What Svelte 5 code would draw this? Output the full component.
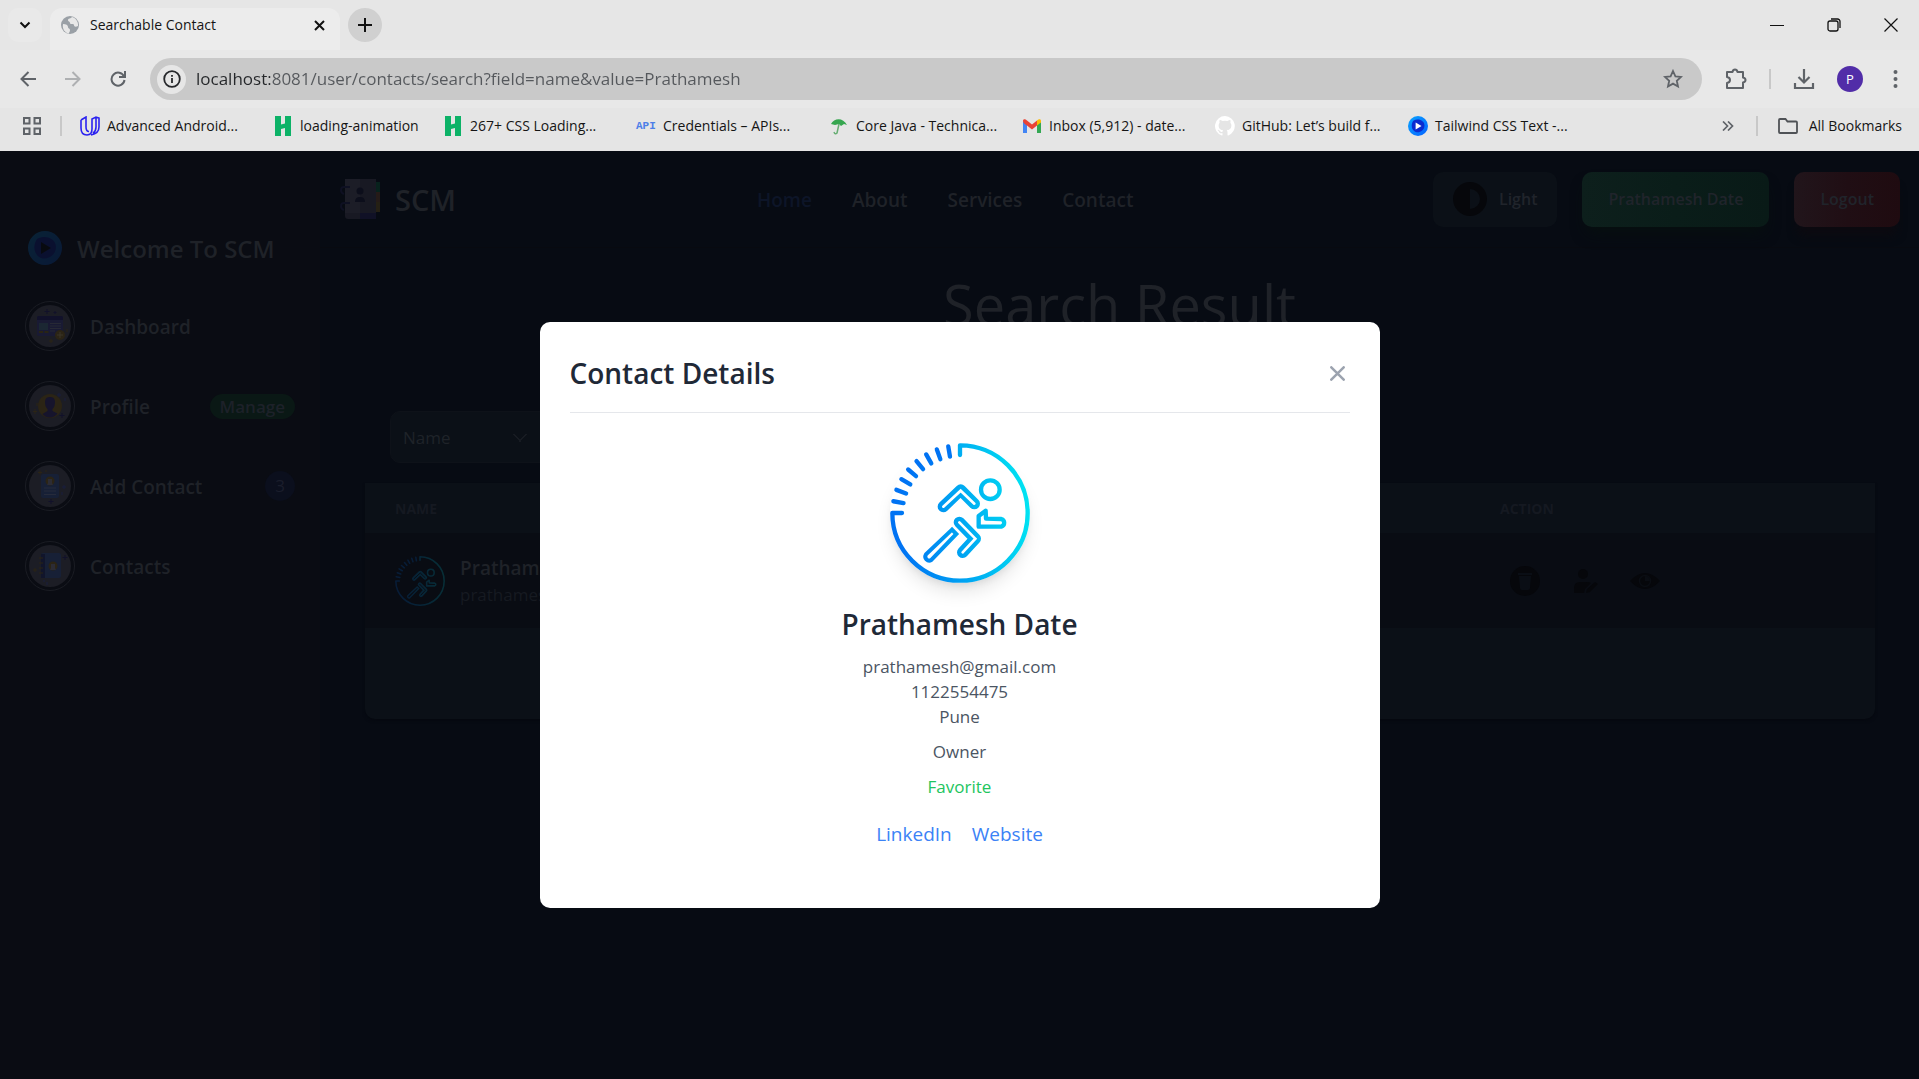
<script>
  const bookmarks = [
    { label: 'Advanced Android...', icon: 'udacity' },
    { label: 'loading-animation', icon: 'h', short: true },
    { label: '267+ CSS Loading...', icon: 'h' },
    { label: 'Credentials – APIs...', icon: 'api' },
    { label: 'Core Java - Technica...', icon: 'umbrella' },
    { label: 'Inbox (5,912) - date...', icon: 'gmail' },
    { label: 'GitHub: Let’s build f...', icon: 'github' },
    { label: 'Tailwind CSS Text -...', icon: 'play' },
  ];
  const menu = [
    { label: 'Dashboard', icon: 'dashboard' },
    { label: 'Profile', icon: 'profile', badge: 'Manage' },
    { label: 'Add Contact', icon: 'add', count: '3' },
    { label: 'Contacts', icon: 'contacts' },
  ];
  const nav = ['Home', 'About', 'Services', 'Contact'];
  const ticks = [10, 20, 30, 40, 50, 60, 70, 80];
  let url = $state('localhost:8081/user/contacts/search?field=name&value=Prathamesh');
  let field = $state('Name');
  let open = $state(true);
</script>

{#snippet runner(id, inner)}
  <svg class="runner" viewBox="90 69 420 420" fill="none" aria-hidden="true">
    <defs>
      <linearGradient id={id} gradientUnits="userSpaceOnUse" x1="110" y1="300" x2="505" y2="250">
        <stop offset="0" stop-color="#0072f3" />
        <stop offset="0.5" stop-color="#00a9f2" />
        <stop offset="1" stop-color="#00e3f2" />
      </linearGradient>
    </defs>
    <g stroke="url(#{id})" stroke-width="13" stroke-linecap="round" stroke-linejoin="round">
      <path d="M300 105V76A203 203 0 1 1 97 279H126" />
      {#each ticks as t}
        <path d="M97 279L128 279.2" transform="rotate({t} 300 279)" />
      {/each}
      <circle cx="391" cy="209" r="28" />
      <path d="M250 260L302 210L343 251" stroke-width="34" />
      <path d="M298 307L346 356L308 397" stroke-width="34" />
      <path d="M276 329L198 403A12 12 0 0 0 214 420L289 342Z" stroke-width="12" stroke-linejoin="miter" />
      <path d="M377 272L356 288V320H424A12 12 0 0 0 424 297L378 296Z" stroke-width="13" />
    </g>
    <g stroke={inner} stroke-width="8" stroke-linecap="round" stroke-linejoin="miter">
      <path d="M250 260L302 212L343 251" />
      <path d="M298 307L346 356L308 397" />
    </g>
  </svg>
{/snippet}

{#snippet swirl(id)}
  <svg viewBox="0 0 34 34" aria-hidden="true">
    <defs>
      <linearGradient {id} x1="0" y1="0" x2="1" y2="1">
        <stop offset="0" stop-color="#0aa4ff" />
        <stop offset="1" stop-color="#0562ff" />
      </linearGradient>
    </defs>
    <circle cx="17" cy="17" r="17" fill="url(#{id})" />
    <path d="M9 8c9-5 19 0 19 8 0 9-9 13-15 11-8-3-8-14-4-19z" fill="#0b2bd0" />
    <path d="M13 11l10 6-10 6z" class="play-mark" />
  </svg>
{/snippet}

<div class="window">
  <header class="browser">
    <div class="tabs">
      <button class="drop" aria-label="Search tabs">
        <svg width="12" height="8" viewBox="0 0 12 8" fill="none" stroke="#111" stroke-width="2"><path d="M1.500 1.500L6 6l4.500-4.500" /></svg>
      </button>
      <div class="tab">
        <svg width="20" height="20" viewBox="0 0 20 20"><circle cx="10" cy="10" r="9" fill="#9aa0a6" /><path d="M3 9c3 0 5 1 5 3s2 1 2 3-1 2-1 3.500C5 18 2 14 3 9zM12 2c-1 2-4 1-4 3s2 1 2 3 4 0 4 2 2 2 4 1c.6-4-2-8-6-9z" fill="#e8e8e8" /></svg>
        <span>Searchable Contact</span>
        <button aria-label="Close tab">
          <svg width="11" height="11" viewBox="0 0 11 11" stroke="#111" stroke-width="2"><path d="M1 1l9 9M10 1l-9 9" /></svg>
        </button>
      </div>
      <button class="new" aria-label="New tab">
        <svg width="14" height="14" viewBox="0 0 14 14" stroke="#111" stroke-width="2"><path d="M7 0v14M0 7h14" /></svg>
      </button>
      <div class="controls">
        <button aria-label="Minimize"><svg width="14" height="14" viewBox="0 0 14 14" stroke="#111"><path d="M0 7.500h14" /></svg></button>
        <button aria-label="Restore"><svg width="14" height="14" viewBox="0 0 14 14" fill="none" stroke="#111" stroke-width="1.300"><rect x="1" y="3" width="10" height="10" rx="2" /><path d="M4 1h6.500A2.500 2.500 0 0 1 13 3.500V10" /></svg></button>
        <button aria-label="Close"><svg width="14" height="14" viewBox="0 0 14 14" stroke="#111" stroke-width="1.200"><path d="M.5.5l13 13M13.500.5l-13 13" /></svg></button>
      </div>
    </div>

    <div class="toolbar">
      <button class="tool" aria-label="Back"><svg width="16" height="16" viewBox="0 0 16 16" fill="none" stroke="#5f6368" stroke-width="2"><path d="M16 8H2M8.500 1L1.500 8l7 7" /></svg></button>
      <button class="tool" aria-label="Forward"><svg width="16" height="16" viewBox="0 0 16 16" fill="none" stroke="#aeb0b2" stroke-width="2"><path d="M0 8h14M7.500 1l7 7-7 7" /></svg></button>
      <button class="tool" aria-label="Reload"><svg width="16" height="16" viewBox="0 0 16 16" fill="none" stroke="#5f6368" stroke-width="2"><path d="M14 5.500A6.500 6.500 0 1 0 14.500 9M15 0v6H9" /></svg></button>
      <div class="address">
        <button class="info" aria-label="Site information">
          <svg width="18" height="18" viewBox="0 0 18 18" fill="none" stroke="#26282b" stroke-width="1.800"><circle cx="9" cy="9" r="7.800" /><path d="M9 8v5M9 5v1.700" /></svg>
        </button>
        <input type="text" aria-label="Address" bind:value={url} />
        <button class="star" aria-label="Bookmark this tab">
          <svg width="20" height="20" viewBox="0 0 20 20" fill="none" stroke="#5f6368" stroke-width="1.800"><path d="M10 2l2.400 5.300 5.600.6-4.200 3.900 1.200 5.700-5-2.900-5 2.900 1.200-5.700L2 7.900l5.600-.6z" /></svg>
        </button>
      </div>
      <div class="extras">
        <button aria-label="Extensions"><svg width="22" height="22" viewBox="0 0 22 22" fill="none" stroke="#5f6368" stroke-width="2"><path d="M2 4h5.500q.5-2.500 2.500-2.500T12.500 4H18v5.500q2.500.5 2.500 2.500T18 14.500V20H2v-5q3-.5 3-3T2 9z" stroke-linejoin="round" /></svg></button>
        <i class="rule"></i>
        <button aria-label="Downloads"><svg width="22" height="22" viewBox="0 0 22 22" fill="none" stroke="#5f6368" stroke-width="2.200"><path d="M11 1v13M5.500 9l5.500 5.500L16.500 9M2 15v5h18v-5" /></svg></button>
        <button class="avatar" aria-label="Profile P">P</button>
        <button aria-label="Menu"><svg width="5" height="18" viewBox="0 0 5 18" fill="#5f6368"><circle cx="2.500" cy="2" r="2" /><circle cx="2.500" cy="9" r="2" /><circle cx="2.500" cy="16" r="2" /></svg></button>
      </div>
    </div>

    <nav class="bookmarks" aria-label="Bookmarks">
      <button class="apps" aria-label="Apps"><svg width="18" height="18" viewBox="0 0 18 18" fill="none" stroke="#5f6368" stroke-width="2"><path d="M1 1h5.500v5.500H1zM11.500 1H17v5.500h-5.500zM1 11.500h5.500V17H1zM11.500 11.500H17V17h-5.500z" /></svg></button>
      <i class="rule"></i>
      <div class="list">
        {#each bookmarks as b}
          <a href="#top" class:short={b.short}>
            {#if b.icon === 'udacity'}
              <svg width="20" height="20" viewBox="0 0 20 20" fill="none" stroke="#2b22f0" stroke-width="1.600"><path d="M1 4l5-3v10c0 3 1 4.500 3 4.500M1 4v8c0 4 2 7 6 7 3 0 5-2 5-6V3l4-2 3 1v9c0 4-3 7-8 8M16 1v10c0 3-1 5-3 6.500" /></svg>
            {:else if b.icon === 'h'}
              <svg width="20" height="20" viewBox="0 0 20 20" fill="#0cb267"><path d="M2 0h6v8.500l4-1V0h6v20h-6v-8l-4 1v7H2z" /></svg>
            {:else if b.icon === 'api'}
              <span class="api">API</span>
            {:else if b.icon === 'umbrella'}
              <svg width="20" height="20" viewBox="0 0 20 20"><path d="M2 8C5 2 14 1 18 9l-3-1-3 2-2-2-4 1z" fill="#36a64f" /><path d="M10 8L8 17q-2 2-3-1" fill="none" stroke="#66ad72" stroke-width="1.500" /></svg>
            {:else if b.icon === 'gmail'}
              <svg width="20" height="20" viewBox="0 0 20 20"><path d="M1 5v12h4V8z" fill="#4285f4" /><path d="M19 5v12h-4V8z" fill="#34a853" /><path d="M15 4.500V9.500l4-3V5c0-2-2-2.500-4-.5z" fill="#fbbc04" /><path d="M5 4.500l5 4 5-4v5l-5 4-5-4C3 8 1 7 1 5c0-2 2-2.500 4-.5z" fill="#ea4335" /></svg>
            {:else if b.icon === 'github'}
              <svg width="20" height="20" viewBox="0 0 16 16" fill="#fff"><path d="M8 0a8 8 0 0 0-2.500 15.600c.4.1.5-.2.500-.4v-1.500c-2.200.5-2.700-1-2.700-1-.4-.9-.9-1.200-.9-1.200-.7-.5.1-.5.1-.5.8.1 1.200.8 1.200.8.7 1.300 1.900.9 2.300.7.1-.5.3-.9.500-1.100-1.800-.2-3.600-.9-3.600-4 0-.9.3-1.600.8-2.100-.1-.2-.4-1 .1-2.100 0 0 .7-.2 2.200.8a7.500 7.500 0 0 1 4 0c1.500-1 2.200-.8 2.200-.8.4 1.100.1 1.900.1 2.100.5.6.8 1.300.8 2.100 0 3.100-1.900 3.800-3.700 4 .3.200.6.7.6 1.500v2.200c0 .2.100.5.6.4A8 8 0 0 0 8 0z" /></svg>
            {:else}
              <span class="mini">{@render swirl('swirlSmall')}</span>
            {/if}
            <span>{b.label}</span>
          </a>
        {/each}
      </div>
      <button class="more" aria-label="More bookmarks"><svg width="12" height="10" viewBox="0 0 12 10" fill="none" stroke="#5f6368" stroke-width="1.700"><path d="M1 .5L5.500 5 1 9.500M6 .5L10.500 5 6 9.500" /></svg></button>
      <i class="rule"></i>
      <button class="all">
        <svg width="20" height="16" viewBox="0 0 20 16" fill="none" stroke="#4f5256" stroke-width="1.800"><path d="M1 2q0-1 1-1h5.500l2 2.500H18q1 0 1 1V14q0 1-1 1H2q-1 0-1-1z" /></svg>
        <span>All Bookmarks</span>
      </button>
    </nav>
  </header>

  <div class="page">
    <aside>
      <div class="welcome">
        <span class="brand-mark">{@render swirl('swirlLarge')}</span>
        <h2>Welcome To SCM</h2>
      </div>
      <ul>
        {#each menu as m}
          <li>
            <a href="#top">
              <span class="ring">
                <svg viewBox="0 0 42 42" aria-hidden="true">
                  <circle cx="21" cy="21" r="21" fill="#1c1d25" />
                  {#if m.icon === 'dashboard'}
                    <rect x="8" y="11" width="26" height="20" rx="1.500" fill="#191a33" />
                    <path d="M8 15v-2.500Q8 11 9.500 11h23q1.500 0 1.500 1.500V15z" fill="#11112a" />
                    <path d="M10 18h9v7h-9z" fill="#1b2733" /><path d="M21 18.500h11M21 21h11M21 23.500h11M21 26h5" stroke="#272935" /><path d="M10 26h4v2h-4zM15.500 26h4v2h-4z" fill="#292414" />
                    <circle cx="31" cy="30" r="5" fill="#2b2415" /><path d="M31 27v6M28 30h6" stroke="#3a3428" />
                    <path d="M18 4v5M15.500 6.500h5M26 6v3M24.500 7.500h3" stroke="#11112a" /><path d="M22 34v4M20 36h4M38 24v3" stroke="#2b2415" />
                  {:else if m.icon === 'profile'}
                    <circle cx="21" cy="21" r="12" fill="#2b2415" />
                    <path d="M16 17q0-5 5-5t5 5q0 5-2.500 7v2l5 2.500q-3 4-7.500 4T13.500 29l5-3v-2Q16 22 16 17z" fill="#16142c" />
                    <path d="M30 8v4M28 10h4M36 13v3" stroke="#191f3f" /><path d="M33 28v5M30.500 30.500h5" stroke="#11112a" /><path d="M6 24v5M4 26.500h4M8 18v3" stroke="#2b2415" />
                  {:else if m.icon === 'add'}
                    <rect x="12" y="9" width="18" height="24" rx="2" fill="#172036" />
                    <circle cx="21" cy="16" r="4.500" fill="#2b2415" /><path d="M19 14h4v4l1 2h-6l1-2z" fill="#2c2c35" />
                    <path d="M15 23h12M15 26h12M15 29.500h12" stroke="#262b3b" />
                    <path d="M11 5.500v4M9 7.500h4M17 5v2" stroke="#2b2415" /><path d="M22 34v5M19.500 36.500h5" stroke="#11112a" /><path d="M35 20v4M33 22h4M33 27v3" stroke="#191f3f" />
                  {:else}
                    <rect x="12" y="8" width="20" height="25" rx="2" fill="#172036" /><path d="M12 9h4v24h-4z" fill="#11152b" />
                    <circle cx="24" cy="21" r="4.500" fill="#2b2415" /><path d="M22 19h4v4l1 2h-6l1-2z" fill="#2c2c35" />
                    <path d="M10 13h4M10 18h4M10 23h4M10 28h4" stroke="#2b2415" /><path d="M36 10v5M33.500 12.500h5" stroke="#11112a" /><path d="M6 23v4M4 25h4" stroke="#2b2415" /><path d="M14 36h2M18 37v3" stroke="#191f3f" />
                  {/if}
                </svg>
              </span>
              <span class="label">{m.label}</span>
              {#if m.badge}<span class="badge">{m.badge}</span>{/if}
              {#if m.count}<span class="count">{m.count}</span>{/if}
            </a>
          </li>
        {/each}
      </ul>
    </aside>

    <main>
      <div class="top">
        <a class="brand" href="#top">
          <svg width="40" height="42" viewBox="0 0 40 42" aria-hidden="true">
            <path d="M35 4h5v10h-5z" fill="#08221d" /><path d="M35 14h5v10h-5z" fill="#251b18" /><path d="M35 24h5v10h-5z" fill="#252014" />
            <path d="M5 1h31v40H8q-3 0-3-3z" fill="#181923" /><path d="M5 1h15v34H5z" fill="#1c1d27" /><path d="M20 35h16v6H20z" fill="#101126" />
            <circle cx="20" cy="13" r="3.500" fill="#0c0e1b" /><path d="M15 24q0-5 5-5t5 5z" fill="#0c0e1b" />
            <path d="M10 9H4q-3 0-3 3t3 4M10 25H4q-3 0-3 3t3 4" fill="none" stroke="#0e1022" stroke-width="2" />
          </svg>
          <span>SCM</span>
        </a>
        <nav aria-label="Main">
          {#each nav as n}<a href="#top" class:current={n === 'Home'}>{n}</a>{/each}
        </nav>
        <div class="actions">
          <button class="light">
            <svg width="34" height="34" viewBox="0 0 34 34" aria-hidden="true"><circle cx="17" cy="17" r="17" fill="#06070b" /><path d="M17 7a10 10 0 0 1 0 20z" fill="#0b1017" /></svg>
            <span>Light</span>
          </button>
          <button class="user">Prathamesh Date</button>
          <button class="logout">Logout</button>
        </div>
      </div>

      <h1>Search Result</h1>

      <div class="filter">
        <select aria-label="Search field" bind:value={field}>
          <option>Name</option>
        </select>
      </div>

      <div class="sheet">
        <table>
          <thead><tr><th>NAME</th><th class="act">ACTION</th></tr></thead>
          <tbody>
            <tr>
              <td>
                <div class="person">
                  <span class="face">{@render runner('ringSmall', '#0a0d14')}</span>
                  <div><strong>Prathamesh Date</strong><small>prathamesh@gmail.com</small></div>
                </div>
              </td>
              <td>
                <div class="icons">
                  <button aria-label="Delete"><svg width="30" height="30" viewBox="0 0 30 30"><circle cx="15" cy="15" r="15" fill="#06070b" /><path d="M8 7h14v2H8zM9 10h12l-1 12q0 2-2 2h-6q-2 0-2-2z" fill="#0a0e15" /></svg></button>
                  <button aria-label="Edit"><svg width="30" height="30" viewBox="0 0 30 30" fill="#06070b"><circle cx="13" cy="8" r="5" /><path d="M4 27v-5q0-6 6-6h6q4 0 5 1l-6 6-1 4zM16 27l1-4 8-7 3 2-8 8z" /></svg></button>
                  <button aria-label="View"><svg width="30" height="30" viewBox="0 0 30 30"><path d="M0 15q15-16 30 0-15 16-30 0z" fill="#06070b" /><circle cx="15" cy="15" r="5.500" fill="none" stroke="#0a0d13" stroke-width="1.500" /><path d="M15 15v-5a5 5 0 0 1 5 5z" fill="#0a0d13" /></svg></button>
                </div>
              </td>
            </tr>
          </tbody>
        </table>
      </div>
    </main>

    {#if open}
      <div class="overlay">
        <div class="modal" role="dialog" aria-modal="true" aria-labelledby="modal-title">
          <div class="modal-head">
            <h3 id="modal-title">Contact Details</h3>
            <button aria-label="Close modal" onclick={() => (open = false)}>
              <svg width="15" height="15" viewBox="0 0 15 15" fill="none" stroke="#9ca3af" stroke-width="2.500" stroke-linecap="round"><path d="M1.300 1.300l12.400 12.400M13.700 1.300L1.300 13.700" /></svg>
            </button>
          </div>
          <div class="modal-body">
            <span class="photo">{@render runner('ringLarge', '#fff')}</span>
            <h4>Prathamesh Date</h4>
            <p class="tight">prathamesh@gmail.com</p>
            <p class="tight">1122554475</p>
            <p>Pune</p>
            <p>Owner</p>
            <p class="fav">Favorite</p>
            <div class="links"><a href="#linkedin">LinkedIn</a><a href="#website">Website</a></div>
          </div>
        </div>
      </div>
    {/if}
  </div>
</div>

<style>
  :global(body) { margin: 0; }
  * { box-sizing: border-box; }
  .window { min-height: 100vh; display: flex; flex-direction: column; font-family: "Segoe UI", "Open Sans", sans-serif; }
  button { border: 0; padding: 0; background: none; font: inherit; color: inherit; display: flex; align-items: center; justify-content: center; cursor: pointer; }
  a { color: inherit; text-decoration: none; }
  svg { display: block; flex: none; }
  h1, h2, h3, h4, p, ul { margin: 0; padding: 0; list-style: none; }

  .browser { background: #e5e5e5; color: #151515; font-size: 14px; line-height: 20px; }
  .tabs { height: 50px; display: flex; align-items: center; padding-left: 8px; background: #e6e6e6; }
  .drop { width: 34px; height: 34px; border-radius: 10px; background: #e9e9e9; }
  .tab { width: 290px; height: 42px; margin: 8px 8px 0; padding: 0 15px 8px 10px; display: flex; align-items: center; gap: 10px; background: #ececec; border-radius: 12px 12px 0 0; }
  .tab span { flex: 1; }
  .new { width: 34px; height: 34px; border-radius: 50%; background: #d0d0d0; }
  .controls { margin-left: auto; display: flex; }
  .controls button { width: 57px; height: 50px; }
  .toolbar { height: 58px; display: flex; align-items: center; padding-left: 5px; background: #e8e8e8; }
  .tool { width: 45px; height: 42px; }
  .address { flex: 1; height: 42px; margin-left: 10px; padding: 0 19px 0 7px; display: flex; align-items: center; background: #c9c9c9; border-radius: 21px; }
  .info { width: 29px; height: 29px; border-radius: 50%; background: #e6e6e6; }
  .address input { flex: 1; min-width: 0; height: 30px; border: 0; outline: 0; padding: 0; margin-left: 10px; font: 17px/30px "Segoe UI", "Open Sans", sans-serif; color: #505357; -webkit-text-fill-color: transparent; background: linear-gradient(90deg, #25272a 74px, #55585c 74px); background-clip: text; -webkit-background-clip: text; }
  .extras { display: flex; align-items: center; gap: 22px; width: 217px; padding-left: 23px; }
  .rule { width: 2px; height: 20px; background: #c8c8c8; }
  .avatar { width: 26px; height: 26px; border-radius: 50%; background: #512da8; color: #fff; font-size: 13px; }
  .extras .avatar { margin-right: 8px; }
  .bookmarks { height: 43px; display: flex; align-items: center; padding: 0 17px 8px 23px; }
  .apps { margin-right: 19px; }
  .list { flex: 1; min-width: 0; display: flex; overflow: hidden; padding-left: 18px; }
  .list a { width: 193px; flex: none; display: flex; align-items: center; gap: 7px; white-space: nowrap; }
  .list a.short { width: 170px; }
  .api { width: 20px; font: bold 11px/20px "Liberation Mono", monospace; color: #4d7fe8; }
  .mini { width: 20px; height: 20px; --mark: #fff; }
  .play-mark { fill: var(--mark); }
  .more { margin-right: 22px; }
  .all { gap: 11px; margin-left: 20px; }

  .page { flex: 1; position: relative; display: grid; grid-template-columns: 320px 1fr; background: #070b13; color: #1f2228; }
  aside { background: #0a0c13; padding: 77px 25px 0; }
  .welcome { display: flex; align-items: center; gap: 15px; padding-left: 3px; height: 40px; }
  .brand-mark { width: 34px; height: 34px; opacity: .15; --mark: #000; }
  .welcome h2 { padding-top: 2px; font-size: 24px; line-height: 40px; font-weight: 600; white-space: nowrap; }
  aside ul { padding-top: 18px; }
  li a { height: 80px; display: flex; align-items: center; font-size: 19px; font-weight: 600; }
  .ring { width: 50px; height: 50px; padding: 3px; border: 1px solid #1a1c23; border-radius: 50%; }
  .label { margin-left: 15px; padding-top: 2px; }
  .badge { margin-left: auto; height: 25px; padding: 0 10px; border-radius: 13px; background: #0a1815; color: #1d2129; font-size: 17px; line-height: 26px; }
  .count { margin-left: auto; width: 30px; height: 30px; border-radius: 50%; background: #0b0f1d; color: #1b1e2c; font-size: 17px; line-height: 30px; text-align: center; font-weight: 500; }

  .top { height: 97px; padding: 0 19px 0 20px; display: grid; grid-template-columns: 417px 1fr auto; align-items: center; border-bottom: 1px solid #080a10; }
  .brand { display: flex; align-items: center; gap: 15px; font-size: 29px; font-weight: 600; }
  .top nav { display: flex; gap: 40px; padding-top: 2px; font-size: 19px; font-weight: 600; }
  .current { color: #0d1528; }
  .actions { display: flex; gap: 25px; }
  .actions button { height: 55px; padding: 0 26px; border-radius: 10px; font-size: 16px; font-weight: 600; color: #20242b; white-space: nowrap; }
  .actions .light { padding: 0 20px; gap: 12px; background: #0b1017; }
  .actions .user { background: linear-gradient(90deg, #0d1f1c, #0a1d19 50%, #091a17); box-shadow: 0 10px 15px -5px #07100f; }
  .actions .logout { background: linear-gradient(90deg, #21151b, #200e14 50%, #1f0b10); box-shadow: 0 12px 10px -3px #0c0a10; }
  h1 { margin-top: 26px; text-align: center; font-size: 56px; line-height: 60px; font-weight: 400; }
  .filter { padding: 77px 70px 0; }
  select { appearance: none; width: 184px; height: 52px; padding: 0 12px; border: 1px solid #0e1219; border-radius: 10px; color: #1f2329; font: 17px "Segoe UI", "Open Sans", sans-serif; background: linear-gradient(45deg, transparent 46%, #171b22 46% 58%, transparent 58%) 122px 22px / 8px 8px no-repeat, linear-gradient(-45deg, transparent 46%, #171b22 46% 58%, transparent 58%) 128px 22px / 8px 8px no-repeat, #0b1017; }
  .sheet { margin: 20px 44px 0 45px; padding-bottom: 91px; background: #0b1017; border-radius: 0 0 10px 10px; box-shadow: 0 2px 3px #060910; }
  table { width: 100%; border-collapse: collapse; text-align: left; }
  th { height: 50px; padding: 0 30px; font-size: 14px; font-weight: 700; color: #151921; }
  .act { width: 405px; }
  tbody { background: #090c13; }
  td { height: 95px; padding: 0 30px; }
  .person { display: flex; align-items: center; gap: 15px; }
  .face { width: 50px; height: 50px; opacity: .16; }
  .face :global(svg), .photo :global(svg), .brand-mark :global(svg), .mini :global(svg), .ring svg { width: 100%; height: 100%; }
  strong, small { display: block; }
  strong { font-size: 19px; line-height: 28px; font-weight: 600; }
  small { font-size: 17px; line-height: 25px; color: #161a21; }
  .icons { display: flex; gap: 30px; padding-left: 10px; }

  .overlay { position: absolute; inset: 0; display: flex; align-items: center; justify-content: center; }
  .modal { width: 100%; max-width: 840px; padding: 30px; background: #fff; border-radius: 10px; }
  .modal-head { height: 61px; padding-bottom: 18px; display: flex; align-items: center; justify-content: space-between; border-bottom: 1px solid #e5e7eb; color: #1f2937; }
  .modal-head h3, h4 { font-size: 28px; line-height: 40px; font-weight: 600; }
  .modal-head button { width: 25px; height: 25px; }
  .modal-body { padding: 30px 0 29px; display: flex; flex-direction: column; align-items: center; color: #4b5563; }
  .photo { width: 140px; height: 140px; border-radius: 50%; box-shadow: 0 12px 18px -3px #0000001a, 0 5px 8px -4px #0000001a; }
  h4 { margin: 21px 0 10px; color: #1f2937; }
  p { font-size: 17px; line-height: 25px; margin-bottom: 10px; }
  p.tight { margin-bottom: 0; }
  p.fav { color: #22c55e; }
  .links { display: flex; gap: 20px; padding-top: 10px; font-size: 19px; line-height: 30px; color: #3b82f6; }
</style>
